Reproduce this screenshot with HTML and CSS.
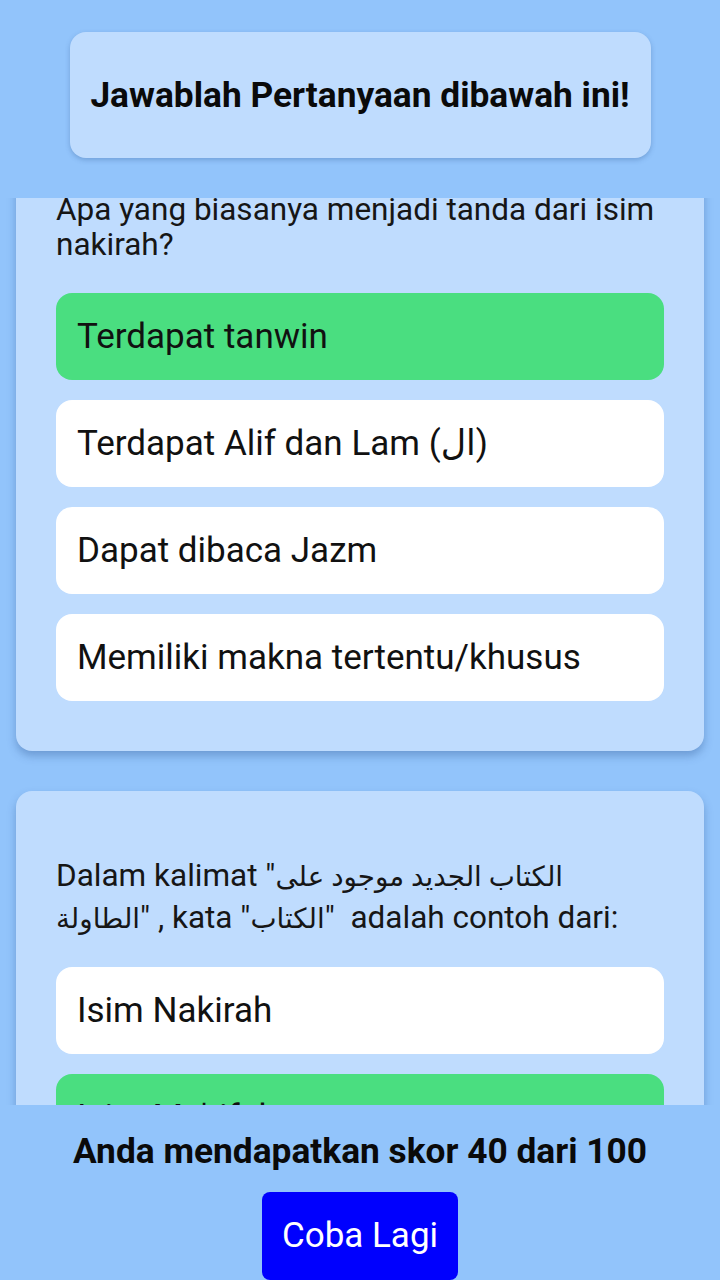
FILE: index.html
```html
<!DOCTYPE html>
<html lang="id">
<head>
<meta charset="utf-8">
<title>Kuis</title>
<link rel="stylesheet" href="styles.css">
</head>
<body>
<div class="app">
  <header class="top">
    <div class="title-card">
      <h1 class="title">Jawablah Pertanyaan dibawah ini!</h1>
    </div>
  </header>

  <main class="scroller">
    <div class="scroll-content">
      <section class="q-card">
        <p class="question">Apa yang biasanya menjadi tanda dari isim nakirah?</p>
        <div class="options">
          <div class="option correct">Terdapat tanwin</div>
          <div class="option">Terdapat Alif dan Lam (ال)</div>
          <div class="option">Dapat dibaca Jazm</div>
          <div class="option">Memiliki makna tertentu/khusus</div>
        </div>
      </section>

      <section class="q-card">
        <p class="question question-ar">Dalam kalimat "<span class="ar">الكتاب الجديد موجود على الطاولة</span>" , kata "<span class="ar">الكتاب</span>"  adalah contoh dari:</p>
        <div class="options">
          <div class="option">Isim Nakirah</div>
          <div class="option correct">Isim Ma'rifah</div>
          <div class="option">Fi'il Madhi</div>
          <div class="option">Huruf Jar</div>
        </div>
      </section>
    </div>
  </main>

  <footer class="bottom">
    <p class="score">Anda mendapatkan skor 40 dari 100</p>
    <button class="retry" type="button">Coba Lagi</button>
  </footer>
</div>
</body>
</html>
```

FILE: styles.css
```css
* { box-sizing: border-box; }

html, body {
  margin: 0;
  padding: 0;
  width: 720px;
  height: 1280px;
  overflow: hidden;
  background: #92c4fb;
  font-family: Roboto, "Noto Sans", "DejaVu Sans", sans-serif;
  color: #111;
}

.app {
  display: flex;
  flex-direction: column;
  height: 1280px;
}

.top {
  padding-top: 32px;
  display: flex;
  justify-content: center;
}

.title-card {
  width: 581px;
  height: 126px;
  background: #bfdcfe;
  border-radius: 16px;
  display: flex;
  align-items: center;
  justify-content: center;
  box-shadow: 0 2px 5px rgba(40, 80, 140, 0.3);
}

.title {
  margin: 0;
  font-size: 35.3px;
  font-weight: 700;
  color: #0a0a0a;
}

.scroller {
  margin-top: 40px;
  height: 908px;
  overflow: hidden;
  padding: 0 16px;
}

.scroll-content {
  display: flex;
  flex-direction: column;
  gap: 40px;
  margin-top: -70px;
  padding-bottom: 20px;
}

.q-card {
  background: #bfdcfe;
  border-radius: 16px;
  padding: 64px 40px 50px;
  box-shadow: 0 5px 8px rgba(40, 80, 140, 0.35);
}

.question {
  margin: 0 0 31px;
  font-size: 31.5px;
  line-height: 35px;
  color: #161616;
}

.question-ar {
  line-height: 41px;
  white-space: pre-wrap;
  margin-bottom: 28px;
}

.ar {
  font-size: 0.88em;
}

.options {
  display: flex;
  flex-direction: column;
  gap: 20px;
}

.option {
  height: 87px;
  background: #ffffff;
  border-radius: 16px;
  display: flex;
  align-items: center;
  padding: 0 21px;
  font-size: 35px;
  color: #111;
}

.option.correct {
  background: #4ade80;
}

.bottom {
  flex: 1;
  display: flex;
  flex-direction: column;
  align-items: center;
}

.score {
  margin: 26px 0 0;
  font-size: 35.3px;
  font-weight: 700;
  line-height: 40px;
  color: #0a0a0a;
}

.retry {
  margin-top: 21px;
  width: 196px;
  height: 88px;
  border: none;
  border-radius: 8px;
  background: #0000fe;
  color: #ffffff;
  font-family: Roboto, "Noto Sans", sans-serif;
  font-size: 35px;
  padding: 0 0 2px;
}
```
